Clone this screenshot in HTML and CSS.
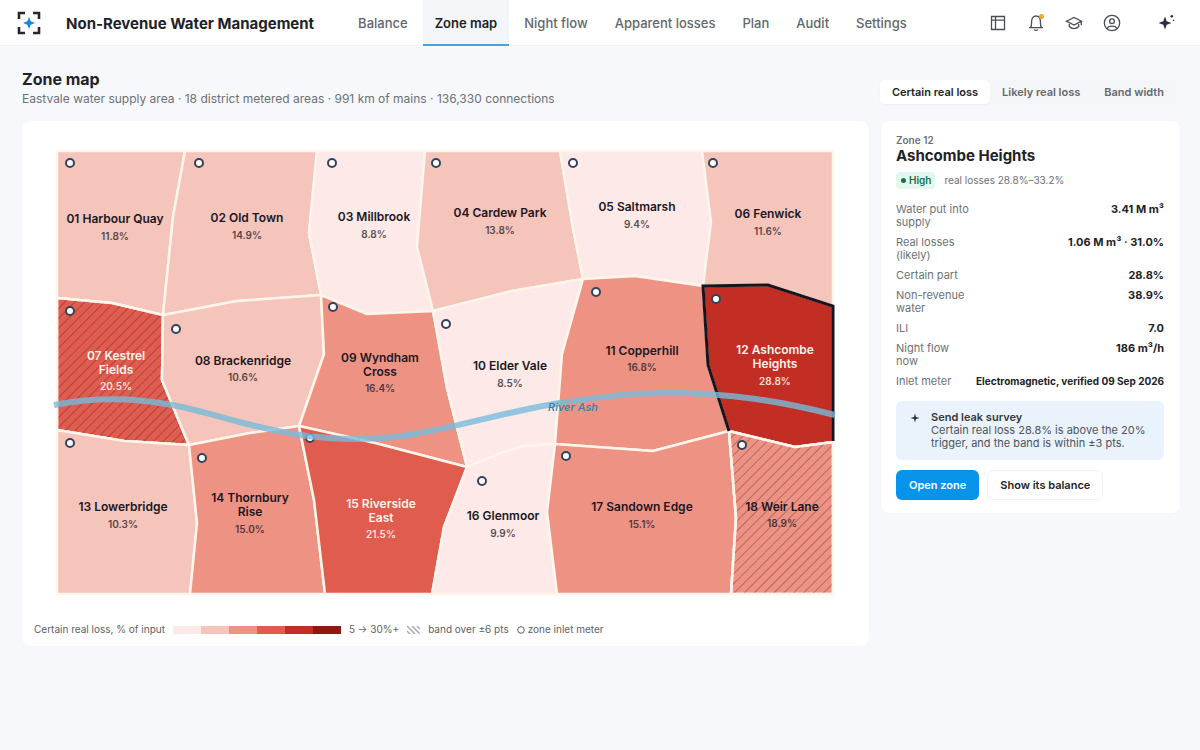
FILE: index.html
```html
<!DOCTYPE html>
<html lang="en">
<head>
<meta charset="utf-8">
<meta name="viewport" content="width=device-width, initial-scale=1">
<title>Zone map - Non-Revenue Water Management</title>
<link rel="stylesheet" href="styles.css">
</head>
<body>
<header class="topbar">
  <svg class="logo" viewBox="0 0 24 24" aria-hidden="true">
    <path d="M2 8V2h6M16 2h6v6M22 16v6h-6M8 22H2v-6" fill="none" stroke="#23282e" stroke-width="2.6"/>
    <path d="M12 6l1.700 4.300L18 12l-4.300 1.700L12 18l-1.700-4.300L6 12l4.300-1.700z" fill="#1688dc"/>
  </svg>
  <div class="brand">Non-Revenue Water Management</div>
  <nav class="nav" aria-label="Main">
    <a href="#">Balance</a>
    <a href="#" class="current" aria-current="page">Zone map</a>
    <a href="#">Night flow</a>
    <a href="#">Apparent losses</a>
    <a href="#">Plan</a>
    <a href="#">Audit</a>
    <a href="#">Settings</a>
  </nav>
  <div class="tools">
    <button type="button" class="tool" aria-label="Layout">
      <svg viewBox="0 0 18 18"><path d="M2.500 2.500h13v13h-13zM2.500 6.200h13M6.500 2.500v13"/></svg>
    </button>
    <button type="button" class="tool" aria-label="Notifications">
      <svg viewBox="0 0 18 18"><path d="M2 13.700h14M3.500 13.700c.8-1 1.100-3 1.100-6C4.600 4.500 6.200 2 9 2s4.400 2.500 4.400 5.700c0 3 .3 5 1.100 6M7.300 15.500c.5 1.200 2.900 1.200 3.400 0"/><circle cx="14.500" cy="2.500" r="2.500" class="alert"/></svg>
    </button>
    <button type="button" class="tool" aria-label="Learn">
      <svg viewBox="0 0 18 18"><path d="M9 3.500L1.500 7.200 9 11l7.500-3.800zM4.300 8.700v3.800c2.200 2.700 7.200 2.700 9.400 0V8.700M16.300 7.300v4"/></svg>
    </button>
    <button type="button" class="tool" aria-label="Account">
      <svg viewBox="0 0 18 18"><circle cx="9" cy="9" r="7.700"/><circle cx="9" cy="7.300" r="2.400"/><path d="M4.200 14.800c.8-3.500 8.800-3.500 9.600 0"/></svg>
    </button>
    <button type="button" class="tool assistant" aria-label="Assistant">
      <svg viewBox="0 0 18 18"><path class="solid" d="M8 2.500l1.700 4.800L14.500 9l-4.800 1.700L8 15.500l-1.700-4.800L1.500 9l4.800-1.700z"/><circle class="solid" cx="14.800" cy="2.300" r="1.300"/><circle class="solid" cx="16.500" cy="6.300" r=".8"/></svg>
    </button>
  </div>
</header>

<main class="page">
  <div class="heading">
    <div>
      <h1>Zone map</h1>
      <p class="muted">Eastvale water supply area · 18 district metered areas · 991 km of mains · 136,330 connections</p>
    </div>
    <div class="segments" role="group" aria-label="Map measure">
      <button type="button" class="on" aria-pressed="true">Certain real loss</button>
      <button type="button" aria-pressed="false">Likely real loss</button>
      <button type="button" aria-pressed="false">Band width</button>
    </div>
  </div>

  <div class="columns">
    <section class="card map-card" aria-label="Map">
      <svg class="map" viewBox="34 133 823 478" role="img" aria-label="District metered areas">
        <defs>
          <pattern id="hatch" width="7" height="7" patternUnits="userSpaceOnUse" patternTransform="rotate(45)">
            <path d="M0 0V7" stroke="#4a1a22" stroke-opacity=".5" stroke-width="2"/>
          </pattern>
        </defs>
        <g class="zones">
          <path class="b2" d="M57 151H185L173 217 163 315 112 303 57 298z"/>
          <path class="b2" d="M185 151H317L309 233 321 295 237 301 163 315 173 217z"/>
          <path class="b1" d="M317 151H425L417 247 433 311 367 314 321 295 309 233z"/>
          <path class="b2" d="M425 151H560L573 228 583 279 512 291 433 311 417 247z"/>
          <path class="b1" d="M560 151H702L711 222 703 286 635 276 583 279 573 228z"/>
          <path class="b2" d="M702 151H833V306L768 285 703 286 711 222z"/>
          <path class="b4" d="M57 298L112 303 163 315 162 380 189 445 124 441 57 430z"/>
          <path class="hatched" d="M57 298L112 303 163 315 162 380 189 445 124 441 57 430z"/>
          <path class="b2" d="M163 315L237 301 321 295 324 354 299 426 250 433 189 445 162 380z"/>
          <path class="b3" d="M321 295L367 314 433 311 447 388 467 467 375 443 299 426 324 354z"/>
          <path class="b1" d="M433 311L512 291 583 279 562 354 555 444 522 446 467 467 447 388z"/>
          <path class="b3" d="M583 279L635 276 703 286 708 365 729 431 653 451 555 444 562 354z"/>
          <path class="b5" d="M703 286L768 285 833 306V442L795 447 729 431 708 365z"/>
          <path class="b2" d="M57 430L124 441 189 445 197 523 190 594H57z"/>
          <path class="b3" d="M189 445L250 433 299 426 314 500 325 594H190L197 523z"/>
          <path class="b4" d="M299 426L375 443 467 467 444 527 432 594H325L314 500z"/>
          <path class="b1" d="M467 467L500 453 525 446 555 444 547 512 557 594H432L444 527z"/>
          <path class="b3" d="M555 444L653 451 729 431 736 518 731 594H557L547 512z"/>
          <path class="b3" d="M729 431L795 447 833 442V594H731L736 518z"/>
          <path class="hatched" d="M729 431L795 447 833 442V594H731L736 518z"/>
          <path class="chosen" d="M729 431L708 365 703 286 768 285 833 306V441"/>
        </g>
        <g class="meters">
          <circle cx="70" cy="163" r="4"/><circle cx="199" cy="163" r="4"/><circle cx="332" cy="163" r="4"/><circle cx="436" cy="163" r="4"/><circle cx="573" cy="163" r="4"/><circle cx="713" cy="163" r="4"/>
          <circle cx="70" cy="311" r="4"/><circle cx="176" cy="329" r="4"/><circle cx="333" cy="307" r="4"/><circle cx="446" cy="324" r="4"/><circle cx="596" cy="292" r="4"/><circle cx="716" cy="299" r="4"/>
          <circle cx="70" cy="443" r="4"/><circle cx="202" cy="458" r="4"/><circle cx="310" cy="438" r="4"/><circle cx="482" cy="481" r="4"/><circle cx="566" cy="456" r="4"/><circle cx="742" cy="445" r="4"/>
        </g>
        <path class="river" d="M54 405C95 397 135 398 172 405C215 413 250 428 300 435C350 442 395 439 430 431C480 421 520 409 560 403C620 394 640 393 668 393C730 393 780 401 835 415"/>
        <text class="river-name" x="573" y="411">River Ash</text>
        <g class="names">
          <text x="115" y="223">01 Harbour Quay</text><text class="pct" x="115" y="240">11.8%</text>
          <text x="247" y="222">02 Old Town</text><text class="pct" x="247" y="239">14.9%</text>
          <text x="374" y="221">03 Millbrook</text><text class="pct" x="374" y="238">8.8%</text>
          <text x="500" y="217">04 Cardew Park</text><text class="pct" x="500" y="234">13.8%</text>
          <text x="637" y="211">05 Saltmarsh</text><text class="pct" x="637" y="228">9.4%</text>
          <text x="768" y="218">06 Fenwick</text><text class="pct" x="768" y="235">11.6%</text>
          <g class="light"><text x="116" y="360">07 Kestrel</text><text x="116" y="374">Fields</text><text class="pct" x="116" y="390">20.5%</text></g>
          <text x="243" y="365">08 Brackenridge</text><text class="pct" x="243" y="381">10.6%</text>
          <text x="380" y="362">09 Wyndham</text><text x="380" y="376">Cross</text><text class="pct" x="380" y="392">16.4%</text>
          <text x="510" y="370">10 Elder Vale</text><text class="pct" x="510" y="387">8.5%</text>
          <text x="642" y="355">11 Copperhill</text><text class="pct" x="642" y="371">16.8%</text>
          <g class="light"><text x="775" y="354">12 Ashcombe</text><text x="775" y="368">Heights</text><text class="pct" x="775" y="385">28.8%</text></g>
          <text x="123" y="511">13 Lowerbridge</text><text class="pct" x="123" y="528">10.3%</text>
          <text x="250" y="502">14 Thornbury</text><text x="250" y="516">Rise</text><text class="pct" x="250" y="533">15.0%</text>
          <g class="light"><text x="381" y="508">15 Riverside</text><text x="381" y="522">East</text><text class="pct" x="381" y="538">21.5%</text></g>
          <text x="503" y="520">16 Glenmoor</text><text class="pct" x="503" y="537">9.9%</text>
          <text x="642" y="511">17 Sandown Edge</text><text class="pct" x="642" y="528">15.1%</text>
          <text x="782" y="511">18 Weir Lane</text><text class="pct" x="782" y="527">18.9%</text>
        </g>
      </svg>
      <div class="legend">
        <span>Certain real loss, % of input</span>
        <span class="ramp"><i class="s1"></i><i class="s2"></i><i class="s3"></i><i class="s4"></i><i class="s5"></i><i class="s6"></i></span>
        <span>5 → 30%+</span>
        <svg class="hatch-key" viewBox="0 0 13 8" aria-hidden="true"><path d="M0 0l8 8M5 0l8 8M10 0l3 3M0 5l3 3"/></svg>
        <span>band over ±6 pts</span>
        <span class="meter-key"><svg viewBox="0 0 8 8" aria-hidden="true"><circle cx="4" cy="4" r="3.300"/></svg>zone inlet meter</span>
      </div>
    </section>

    <aside class="card detail">
      <div class="eyebrow">Zone 12</div>
      <h2>Ashcombe Heights</h2>
      <div class="status"><span class="badge">High</span><span>real losses 28.8%–33.2%</span></div>
      <dl class="facts">
        <dt>Water put into supply</dt><dd>3.41 M m³</dd>
        <dt>Real losses (likely)</dt><dd>1.06 M m³ · 31.0%</dd>
        <dt>Certain part</dt><dd>28.8%</dd>
        <dt>Non-revenue water</dt><dd>38.9%</dd>
        <dt>ILI</dt><dd>7.0</dd>
        <dt>Night flow now</dt><dd>186 m³/h</dd>
        <dt>Inlet meter</dt><dd class="long">Electromagnetic, verified 09 Sep 2026</dd>
      </dl>
      <div class="advice">
        <svg viewBox="0 0 10 10" aria-hidden="true"><path d="M5 .5l1 3.500L9.500 5 6 6 5 9.500 4 6 .5 5 4 4z"/></svg>
        <div><strong>Send leak survey</strong><p>Certain real loss 28.8% is above the 20% trigger, and the band is within ±3 pts.</p></div>
      </div>
      <div class="actions">
        <button type="button" class="primary">Open zone</button>
        <button type="button" class="secondary">Show its balance</button>
      </div>
    </aside>
  </div>
</main>
</body>
</html>
```
FILE: styles.css
```css
* { box-sizing: border-box; }
body {
  margin: 0;
  min-height: 100vh;
  background: #f7f8fb;
  color: #1d2329;
  font: 11px/13px Inter, "Liberation Sans", sans-serif;
}
h1, h2, p, dl, dd { margin: 0; }
button { font: inherit; color: inherit; border: 0; background: none; cursor: pointer; }

.topbar {
  display: flex;
  align-items: center;
  height: 46px;
  padding: 1px 22px 0 17px;
  background: #fff;
  border-bottom: 1px solid #f1f2f4;
}
.logo { width: 24px; height: 24px; margin-right: 25px; }
.brand { padding-top: 2px; font-size: 15px; line-height: 20px; font-weight: 700; white-space: nowrap; }
.nav { display: flex; gap: 3px; height: 46px; margin-left: 32px; }
.nav a {
  display: flex;
  align-items: center;
  padding: 3px 12px 0;
  border-bottom: 2px solid transparent;
  color: #62676c;
  font-size: 13px;
  font-weight: 500;
  text-decoration: none;
  white-space: nowrap;
}
.nav .current { background: #f3f5f9; border-bottom-color: #45a3d6; color: #1d2329; font-weight: 600; }
.tools { display: flex; gap: 14px; margin-left: auto; }
.tool { display: grid; place-items: center; width: 24px; height: 24px; padding: 0; }
.tool svg { width: 18px; height: 18px; fill: none; stroke: #4a4e53; stroke-width: 1.3; overflow: visible; }
.tool .alert { fill: #f5a623; stroke: none; }
.tool .solid { fill: #2b2d42; stroke: none; }
.assistant { margin-left: 16px; }

.page { padding: 22px 20px 24px 22px; }
.heading { display: flex; justify-content: space-between; align-items: flex-end; margin-bottom: 13px; }
h1 { font-size: 16px; line-height: 22px; font-weight: 700; }
.muted { color: #6c7177; font-size: 12px; line-height: 18px; }
.segments { display: flex; margin-bottom: 3px; padding: 1px 4px 1px 2px; border-radius: 6px; background: #f5f6f9; }
.segments button { height: 24px; padding: 0 12px; border-radius: 5px; color: #65696e; font-weight: 600; }
.segments .on { background: #fff; color: #1d2329; box-shadow: 0 1px 2px #00000008; }

.columns { display: grid; grid-template-columns: minmax(0, 1fr) 299px; gap: 12px; align-items: start; }
.card { background: #fff; border-radius: 8px; box-shadow: 0 0 2px #1d23290a; }
.map-card { padding: 12px 12px 10px; }
.map { display: block; width: 100%; height: auto; }
.zones path { stroke: #fff5ea; stroke-width: 2.5; stroke-linejoin: round; }
.b1 { fill: #fce9e8; }
.b2 { fill: #f5c4bb; }
.b3 { fill: #ee9384; }
.b4 { fill: #e05c4e; }
.b5 { fill: #c22d24; }
.zones .hatched { fill: url(#hatch); fill-opacity: .7; }
.zones .chosen { fill: none; stroke: #15151f; stroke-width: 3; stroke-linejoin: miter; }
.meters { fill: #fff; stroke: #33425a; stroke-width: 2; }
.river { fill: none; stroke: #78bbdb; stroke-width: 6; opacity: .8; }
.river-name { fill: #3480a8; font-size: 11px; font-style: italic; font-weight: 500; text-anchor: middle; }
.names { fill: #1b1722; font-size: 12px; font-weight: 600; text-anchor: middle; }
.names .pct { font-size: 10px; font-weight: 600; opacity: .75; }
.names .light { fill: #fff3ea; }
.names .light .pct { opacity: .9; }

.legend { display: flex; align-items: center; gap: 8px; margin-top: 12px; color: #5d6166; font-size: 10px; white-space: nowrap; }
.ramp { display: flex; }
.ramp i { width: 28px; height: 8px; }
.s1 { background: #fce9e8; }
.s2 { background: #f5c4bb; }
.s3 { background: #ee9384; }
.s4 { background: #e05c4e; }
.s5 { background: #c22d24; }
.s6 { background: #8c1a10; }
.hatch-key { width: 13px; height: 8px; stroke: #a9abae; stroke-width: 1.5; }
.meter-key { display: flex; align-items: center; gap: 3px; }
.meter-key svg { width: 8px; height: 8px; fill: none; stroke: #5d6166; }

.detail { padding: 12px 16px 13px 15px; }
.eyebrow { color: #6c7177; font-size: 10px; line-height: 14px; font-weight: 600; }
h2 { font-size: 15px; line-height: 18px; font-weight: 700; }
.status { display: flex; align-items: center; gap: 9px; margin-top: 7px; color: #6c7177; font-size: 10px; }
.badge { display: flex; align-items: center; gap: 3px; padding: 2px 4px 2px 5px; border-radius: 4px; background: #e3f7ee; color: #137150; font-weight: 600; }
.badge::before { content: ""; width: 5px; height: 5px; border-radius: 50%; background: currentColor; }
.facts { display: grid; grid-template-columns: 1fr auto; gap: 7px 4px; margin-top: 14px; }
.facts dt { color: #6c7177; }
.facts dd { font-weight: 700; text-align: right; white-space: nowrap; }
.facts .long { font-size: 10px; }
.advice { display: flex; gap: 11px; margin-top: 13px; padding: 10px 12px 10px 14px; border-radius: 6px; background: #eaf2fb; color: #4d545d; }
.advice svg { width: 10px; height: 10px; margin-top: 2px; flex: none; fill: #2b3138; }
.advice strong { display: block; color: #33383e; font-weight: 600; }
.actions { display: flex; gap: 8px; margin-top: 10px; }
.actions button { height: 30px; padding: 0 13px; border-radius: 6px; font-weight: 600; }
.actions .primary { background: #0893ea; color: #fff; }
.actions .secondary { padding: 0 12px; background: #fff; border: 1px solid #f1f2f4; }
```
